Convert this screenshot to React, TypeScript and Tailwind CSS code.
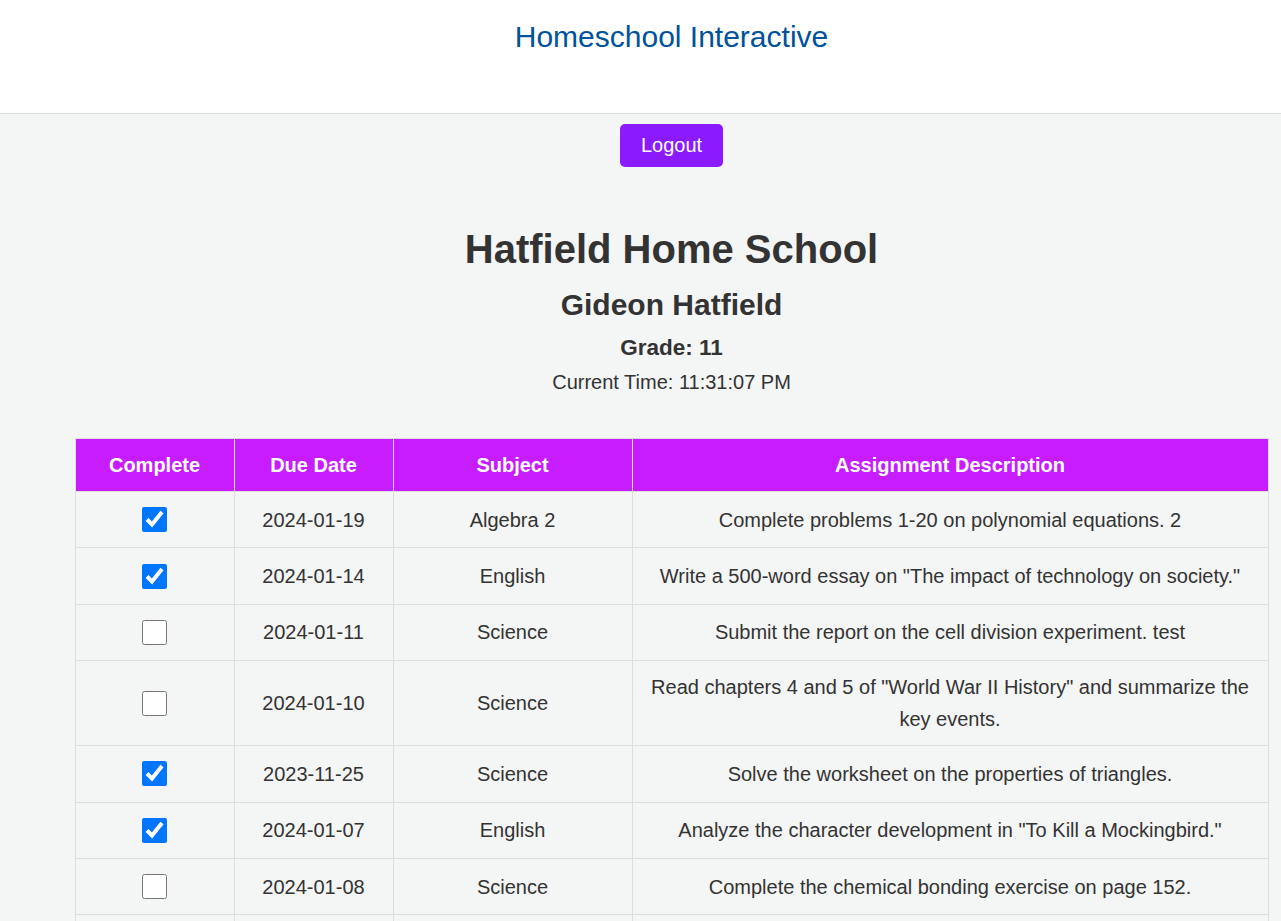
import React from 'react'

// ============================================================================
// Data
// ============================================================================

interface Assignment {
  done: boolean
  due: string
  subject: string
  description: string
}

const ASSIGNMENTS: Assignment[] = [
  { done: true, due: '2024-01-19', subject: 'Algebra 2', description: 'Complete problems 1-20 on polynomial equations. 2' },
  { done: true, due: '2024-01-14', subject: 'English', description: 'Write a 500-word essay on "The impact of technology on society."' },
  { done: false, due: '2024-01-11', subject: 'Science', description: 'Submit the report on the cell division experiment. test' },
  { done: false, due: '2024-01-10', subject: 'Science', description: 'Read chapters 4 and 5 of "World War II History" and summarize the key events.' },
  { done: true, due: '2023-11-25', subject: 'Science', description: 'Solve the worksheet on the properties of triangles.' },
  { done: true, due: '2024-01-07', subject: 'English', description: 'Analyze the character development in "To Kill a Mockingbird."' },
  { done: false, due: '2024-01-08', subject: 'Science', description: 'Complete the chemical bonding exercise on page 152.' },
  { done: false, due: '2024-01-05', subject: 'History', description: 'Prepare a timeline of the major events of the Civil War.' },
  { done: true, due: '2024-01-03', subject: 'Algebra 2', description: 'Review chapter 6 and complete the practice quiz.' },
]

const HEADERS = [
  { label: 'Complete', width: 'w-[159px]' },
  { label: 'Due Date', width: 'w-[159px]' },
  { label: 'Subject', width: 'w-[239px]' },
  { label: 'Assignment Description', width: 'w-[636px]' },
]

// ============================================================================
// Sub-Components
// ============================================================================

function Header() {
  return (
    <header className="h-[114px] bg-white border-b border-[#dddddd] pt-[19px] text-center">
      <h1 className="text-[30px] leading-[35px] text-[#00529b]">Homeschool Interactive</h1>
    </header>
  )
}

function AssignmentRow({ item }: { item: Assignment }) {
  const cell = 'border border-[#dddddd] px-[10px] py-[10px] text-center align-middle'
  return (
    <tr>
      <td className={cell}>
        <div className="h-[35.4px] flex items-center justify-center">
          <input type="checkbox" defaultChecked={item.done} className="w-[25px] h-[25px] m-0" />
        </div>
      </td>
      <td className={cell}>{item.due}</td>
      <td className={cell}>{item.subject}</td>
      <td className={cell}>{item.description}</td>
    </tr>
  )
}

// ============================================================================
// App
// ============================================================================

export default function App() {
  return (
    <div className="w-full overflow-hidden">
      <div
        className="w-[1343px] min-h-screen bg-[#f4f5f5] text-[#333333]"
        style={{ fontFamily: '"Liberation Sans", Arial, sans-serif' }}
      >
        <Header />

        <main className="flex flex-col items-center text-center">
          <button className="mt-[10px] h-[43px] px-[21px] rounded-[5px] bg-[#8c1aff] text-white text-[20px] leading-[23px]">
            Logout
          </button>

          <h2 className="mt-[59px] text-[40px] leading-[46px] font-bold">Hatfield Home School</h2>
          <h3 className="mt-[15px] text-[30px] leading-[35px] font-bold">Gideon Hatfield</h3>
          <p className="mt-[13px] text-[22.5px] leading-[25px] font-bold">Grade: 11</p>
          <p className="mt-[11px] text-[20px] leading-[23px]">Current Time: 11:31:07 PM</p>
        </main>

        <table className="mt-[44px] mx-auto w-[1193px] border-collapse table-fixed text-[20px] leading-[32px]">
          <thead>
            <tr className="bg-[#c71cff] text-white">
              {HEADERS.map(h => (
                <th key={h.label} className={`${h.width} border border-[#dddddd] px-[10px] py-[10px] font-bold`}>
                  {h.label}
                </th>
              ))}
            </tr>
          </thead>
          <tbody>
            {ASSIGNMENTS.map((item, i) => (
              <AssignmentRow key={i} item={item} />
            ))}
          </tbody>
        </table>
      </div>
    </div>
  )
}
